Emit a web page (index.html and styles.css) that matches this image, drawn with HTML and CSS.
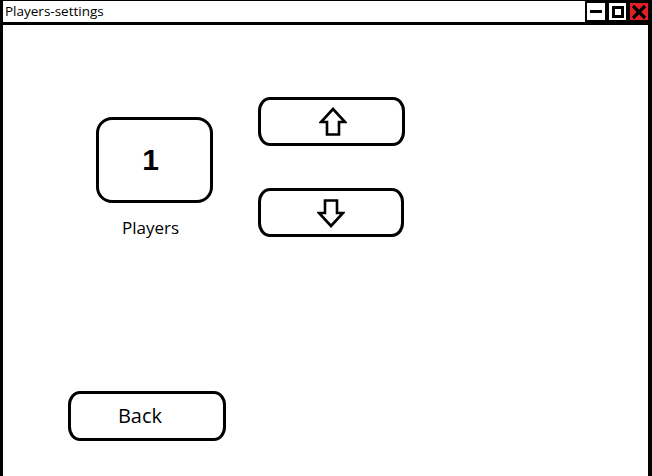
FILE: index.html
```html
<!DOCTYPE html>
<html>
<head>
<meta charset="utf-8">
<link rel="stylesheet" href="styles.css">
</head>
<body>
<div class="window">
  <div class="titlebar">
    <span class="title">Players-settings</span>
    <div class="controls">
      <div class="ctrl min"><span class="dash"></span></div>
      <div class="ctrl max"><span class="sq"></span></div>
      <div class="ctrl close">
        <svg width="16" height="16" viewBox="0 0 16 16"><path d="M2 2 L14 14 M14 2 L2 14" stroke="#000" stroke-width="3.2"/></svg>
      </div>
    </div>
  </div>
  <div class="content">
    <div class="top">
      <div class="players">
        <div class="count">1</div>
        <div class="label">Players</div>
      </div>
      <div class="arrows">
        <div class="btn arrow-btn">
          <svg width="28" height="30" viewBox="0 0 28 30"><path d="M14 2 L26 15 L20 15 L20 27.5 L8 27.5 L8 15 L2 15 Z" fill="#fff" stroke="#000" stroke-width="2.6" stroke-linejoin="miter"/></svg>
        </div>
        <div class="btn arrow-btn down">
          <svg width="28" height="30" viewBox="0 0 28 30"><path d="M14 28 L26 15 L20 15 L20 2.5 L8 2.5 L8 15 L2 15 Z" fill="#fff" stroke="#000" stroke-width="2.6" stroke-linejoin="miter"/></svg>
        </div>
      </div>
    </div>
    <div class="btn back">Back</div>
  </div>
</div>
</body>
</html>
```
FILE: styles.css
```css
html, body {
  margin: 0;
  padding: 0;
  background: #fff;
}
.window {
  width: 652px;
  height: 476px;
  box-sizing: border-box;
  border-left: 3px solid #000;
  border-right: 4px solid #000;
  border-top: 1px solid #000;
  font-family: "Open Sans", "DejaVu Sans", sans-serif;
}
.titlebar {
  height: 21px;
  border-bottom: 3px solid #000;
  display: flex;
  align-items: center;
  justify-content: space-between;
}
.title {
  font-size: 13.5px;
  padding-left: 2px;
  color: #000;
  line-height: 21px;
}
.controls {
  display: flex;
  height: 21px;
  margin-right: -2px;
}
.ctrl {
  width: 17px;
  height: 17px;
  border: 2px solid #000;
  display: flex;
  align-items: center;
  justify-content: center;
  box-sizing: content-box;
}
.min {
  width: 18px;
}
.dash {
  width: 12px;
  height: 3px;
  background: #000;
}
.sq {
  width: 6px;
  height: 6px;
  border: 3px solid #000;
}
.close {
  background: #e12026;
  width: 18px;
}
.content {
  padding: 72px 0 0 65px;
}
.top {
  display: flex;
  margin-left: 28px;
  gap: 45px;
}
.players {
  width: 117px;
  padding-top: 20px;
  display: flex;
  flex-direction: column;
  align-items: center;
}
.count {
  width: 117px;
  height: 86px;
  box-sizing: border-box;
  border: 3px solid #000;
  border-radius: 16px;
  display: flex;
  align-items: center;
  justify-content: center;
  padding-right: 8px;
  font-family: "Liberation Sans", Arial, sans-serif;
  font-weight: bold;
  font-size: 30px;
  color: #000;
}
.label {
  margin-top: 14px;
  padding-right: 8px;
  font-size: 17px;
  line-height: 22px;
  color: #000;
}
.arrows {
  display: flex;
  flex-direction: column;
  gap: 42px;
}
.btn {
  box-sizing: border-box;
  border: 3px solid #000;
  border-radius: 12px / 14px;
  display: flex;
  align-items: center;
  justify-content: center;
}
.arrow-btn {
  width: 147px;
  height: 49px;
  padding: 1px 0 0 2px;
}
.arrow-btn.down {
  width: 146px;
  padding: 0 1px 0 0;
}
.back {
  margin-top: 152px;
  width: 158px;
  height: 50px;
  font-size: 20px;
  color: #000;
  padding: 0 14px 1px 0;
}
```
